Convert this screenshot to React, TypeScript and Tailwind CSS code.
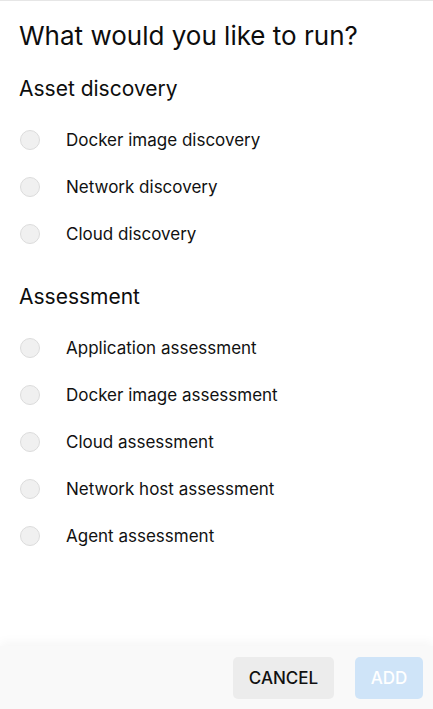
import React, { useState } from 'react';

const discovery = ['Docker image discovery', 'Network discovery', 'Cloud discovery'];
const assessment = [
  'Application assessment',
  'Docker image assessment',
  'Cloud assessment',
  'Network host assessment',
  'Agent assessment',
];

function Option({ label, checked, onSelect }: { label: string; checked: boolean; onSelect: () => void }) {
  return (
    <label className="flex h-[47px] cursor-pointer items-center" onClick={onSelect}>
      <span className="ml-[20px] flex h-[20px] w-[20px] items-center justify-center rounded-full border border-[#dcdcdc] bg-[#f0f0f0]">
        {checked && <span className="h-[10px] w-[10px] rounded-full bg-[#1976d2]" />}
      </span>
      <span className="ml-[26px] text-[17px] leading-[24px] text-[#111111]">{label}</span>
    </label>
  );
}

export default function App() {
  const [selected, setSelected] = useState('');

  return (
    <div className="flex h-screen flex-col border-t border-[#e6e6e6] bg-white font-['Inter',sans-serif]">
      <div className="flex-1">
        <h1 className="pl-[19px] pt-[19px] text-[26px] leading-[32px] text-[#0d0d0d]">What would you like to run?</h1>

        <h2 className="mt-[23px] pl-[19px] text-[21px] leading-[28px] text-[#0d0d0d]">Asset discovery</h2>
        <div className="mt-[13px]">
          {discovery.map((item) => (
            <Option key={item} label={item} checked={selected === item} onSelect={() => setSelected(item)} />
          ))}
        </div>

        <h2 className="mt-[26px] pl-[19px] text-[21px] leading-[28px] text-[#0d0d0d]">Assessment</h2>
        <div className="mt-[13px]">
          {assessment.map((item) => (
            <Option key={item} label={item} checked={selected === item} onSelect={() => setSelected(item)} />
          ))}
        </div>
      </div>

      <div className="flex h-[63px] items-start justify-end gap-[21px] bg-[#f9f9f9] pr-[10px] pt-[11px] shadow-[0_-4px_10px_rgba(0,0,0,0.04)]">
        <button className="h-[42px] w-[101px] rounded-[5px] bg-[#ececec] pt-[1px] text-[17px] font-medium text-[#111111]">CANCEL</button>
        <button
          disabled={!selected}
          className="h-[42px] w-[68px] rounded-[5px] bg-[#cfe4f8] pt-[1px] text-[17px] font-medium text-white"
        >
          ADD
        </button>
      </div>
    </div>
  );
}
